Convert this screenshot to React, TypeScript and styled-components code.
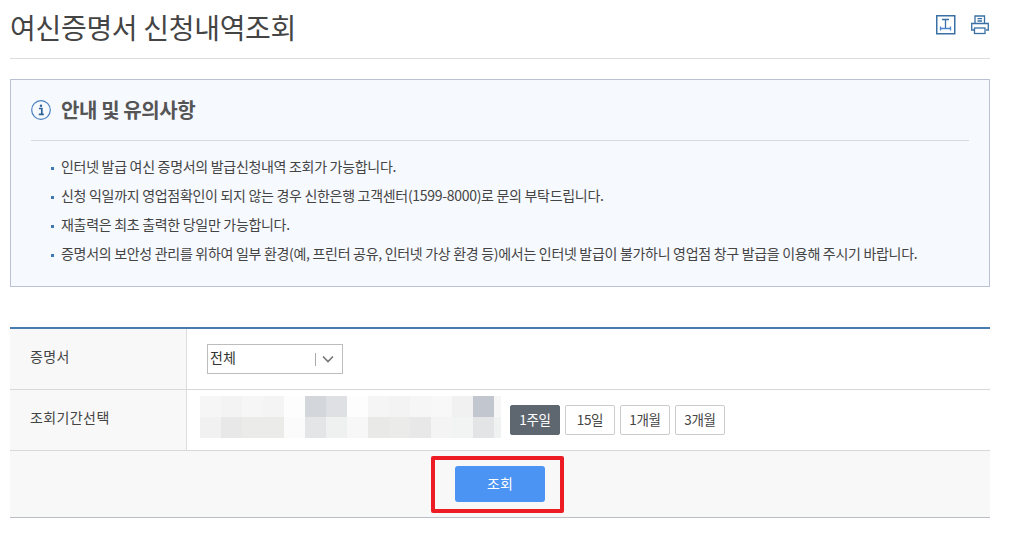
import styled, { createGlobalStyle } from "styled-components"

const GlobalStyle = createGlobalStyle`
  html, body {
    margin: 0;
    padding: 0;
    background: #fff;
    font-family: "Noto Sans CJK KR", "Noto Sans", sans-serif;
    color: #444;
  }
`
const Page = styled.div`
  width: 980px;
  padding-left: 10px;
`
const Header = styled.div`
  display: flex;
  align-items: center;
  justify-content: space-between;
  height: 58px;
  border-bottom: 1px solid #ddd;
`
const Title = styled.h1`
  margin: 0 0 4px;
  font-size: 28px;
  font-weight: 400;
  letter-spacing: -0.3px;
  color: #444;
`
const Tools = styled.div`
  display: flex;
  gap: 15px;
  margin-bottom: 8px;
`
const Notice = styled.div`
  margin-top: 20px;
  height: 208px;
  box-sizing: border-box;
  padding: 0 20px;
  background: #f6f9fe;
  border: 1px solid #b9c2d2;
`
const NoticeHead = styled.div`
  display: flex;
  align-items: center;
  gap: 10px;
  height: 60px;
  border-bottom: 1px solid #d5d9e0;
`
const NoticeTitle = styled.h2`
  margin: 0 0 2px;
  font-size: 20px;
  font-weight: 700;
  letter-spacing: -0.4px;
  color: #555;
`
const NoticeList = styled.ul`
  margin: 11px 0 0;
  padding: 0 0 0 19px;
  list-style: none;
`
const NoticeItem = styled.li`
  position: relative;
  height: 29px;
  line-height: 29px;
  padding-left: 11px;
  font-size: 14px;
  letter-spacing: -0.3px;
  color: #444;
  white-space: nowrap;

  &::before {
    content: "";
    position: absolute;
    left: 1px;
    top: 15px;
    width: 3px;
    height: 3px;
    background: #3f77b5;
  }
`
const Form = styled.div`
  margin-top: 40px;
  border-top: 2px solid #4a7bad;
`
const Row = styled.div`
  display: flex;
  height: 60px;
  border-bottom: 1px solid #d8d8d8;
`
const Label = styled.div`
  display: flex;
  align-items: center;
  width: 177px;
  box-sizing: border-box;
  padding: 0 0 6px 20px;
  background: #f8f8f8;
  border-right: 1px solid #ddd;
  font-size: 14px;
  letter-spacing: 0.4px;
  color: #444;
`
const Field = styled.div`
  display: flex;
  align-items: center;
  padding-left: 13px;
`
const Select = styled.div`
  display: flex;
  align-items: center;
  width: 136px;
  height: 30px;
  margin-left: 7px;
  box-sizing: border-box;
  padding: 0 8px 0 2px;
  border: 1px solid #bdbdbd;
  font-size: 14px;
  color: #333;
`
const SelectText = styled.span`
  flex: 1;
  position: relative;
  top: -2px;
`
const Caret = styled.span`
  display: flex;
  align-items: center;
  height: 13px;
  padding-left: 6px;
  border-left: 1px solid #aaa;
`
const Mosaic = styled.div`
  display: grid;
  align-self: flex-start;
  margin-top: 6px;
  grid-template-columns: repeat(14, 21px) 7px;
  grid-auto-rows: 21px;
`
const Cell = styled.div<{ $c: string }>`
  background: ${(p) => p.$c};
`
const Periods = styled.div`
  display: flex;
  gap: 5px;
  margin-left: 9px;
`
const Period = styled.button<{ $active?: boolean }>`
  width: 50px;
  height: 30px;
  padding: 0 0 3px;
  border: 1px solid ${(p) => (p.$active ? "#5e6670" : "#ccc")};
  border-radius: 2px;
  background: ${(p) => (p.$active ? "#5e6670" : "#fff")};
  color: ${(p) => (p.$active ? "#fff" : "#444")};
  font-family: inherit;
  font-size: 13.5px;
  letter-spacing: -0.3px;
`
const Footer = styled.div`
  position: relative;
  display: flex;
  justify-content: center;
  align-items: center;
  height: 66px;
  background: #f8f8f8;
  border-bottom: 1px solid #b9bdc6;
`
const Search = styled.button`
  width: 90px;
  height: 36px;
  padding: 0 0 3px;
  border: 0;
  border-radius: 3px;
  background: #4b94f4;
  color: #fff;
  font-family: inherit;
  font-size: 14px;
`
const Highlight = styled.div`
  position: absolute;
  left: 421px;
  top: 5px;
  width: 133px;
  height: 57px;
  box-sizing: border-box;
  border: 4px solid #ed1c24;
  border-radius: 2px;
`

const notices = [
  "인터넷 발급 여신 증명서의 발급신청내역 조회가 가능합니다.",
  "신청 익일까지 영업점확인이 되지 않는 경우 신한은행 고객센터(1599-8000)로 문의 부탁드립니다.",
  "재출력은 최초 출력한 당일만 가능합니다.",
  "증명서의 보안성 관리를 위하여 일부 환경(예, 프린터 공유, 인터넷 가상 환경 등)에서는 인터넷 발급이 불가하니 영업점 창구 발급을 이용해 주시기 바랍니다.",
]

const mosaic = [
  "#f6f6f6", "#f3f3f3", "#f6f6f6", "#f4f4f4", "#fdfdfd", "#d3d6db", "#dfe0e4", "#fdfdfd", "#f5f5f5", "#f3f3f3", "#f6f6f6", "#f8f8f8", "#f1f1f1", "#c2c6ce", "#f6f6f6",
  "#f1f1f1", "#e8e8e8", "#ebebe9", "#ebebe9", "#fbfbfb", "#e3e5e6", "#eff1f1", "#f7f7f7", "#e9e9e8", "#ebebea", "#e8e8e8", "#f4f4f4", "#f2f3f3", "#e3e4e6", "#f0f1f1",
]

const periods = ["1주일", "15일", "1개월", "3개월"]

const App = () => (
  <Page>
    <GlobalStyle />
    <Header>
      <Title>여신증명서 신청내역조회</Title>
      <Tools>
        <svg width="20" height="20" viewBox="0 0 20 20" fill="none" stroke="#3a70a3" strokeWidth="1.3">
          <rect x="0.75" y="0.75" width="18" height="18" strokeWidth="1.5" />
          <path d="M6 4.500h7M9.500 4.500v8.500" />
          <path d="M4 13.500h11M4.500 11.500v4M14.500 11.500v4" stroke="#4a86d0" />
        </svg>
        <svg width="19" height="20" viewBox="0 0 19 20" fill="none" stroke="#3a70a3" strokeWidth="1.3">
          <path d="M4 8V1h9.500v7" />
          <path d="M6.500 3.700h4.500M6.500 6h4.500" />
          <path d="M3 15H0.700V8.500h16.600V15H15" />
          <rect x="3.500" y="13" width="10.500" height="5.500" />
        </svg>
      </Tools>
    </Header>
    <Notice>
      <NoticeHead>
        <svg width="20" height="20" viewBox="0 0 20 20" fill="none">
          <circle cx="10" cy="10" r="9.300" stroke="#4a80c0" strokeWidth="1.200" />
          <circle cx="10" cy="5.800" r="1.200" fill="#2f6299" />
          <path d="M8 8.500h2.800v5.500M7.800 14.300h5" stroke="#2f6299" strokeWidth="1.700" />
        </svg>
        <NoticeTitle>안내 및 유의사항</NoticeTitle>
      </NoticeHead>
      <NoticeList>
        {notices.map((text) => (
          <NoticeItem key={text}>{text}</NoticeItem>
        ))}
      </NoticeList>
    </Notice>
    <Form>
      <Row>
        <Label>증명서</Label>
        <Field>
          <Select>
            <SelectText>전체</SelectText>
            <Caret>
              <svg width="12" height="8" viewBox="0 0 12 8" fill="none" stroke="#777" strokeWidth="1.700">
                <path d="M1 1.500l5 5 5-5" />
              </svg>
            </Caret>
          </Select>
        </Field>
      </Row>
      <Row>
        <Label>조회기간선택</Label>
        <Field>
          <Mosaic>
            {mosaic.map((c, i) => (
              <Cell key={i} $c={c} />
            ))}
          </Mosaic>
          <Periods>
            {periods.map((p, i) => (
              <Period key={p} $active={i === 0}>{p}</Period>
            ))}
          </Periods>
        </Field>
      </Row>
      <Footer>
        <Search>조회</Search>
        <Highlight />
      </Footer>
    </Form>
  </Page>
)

export default App
